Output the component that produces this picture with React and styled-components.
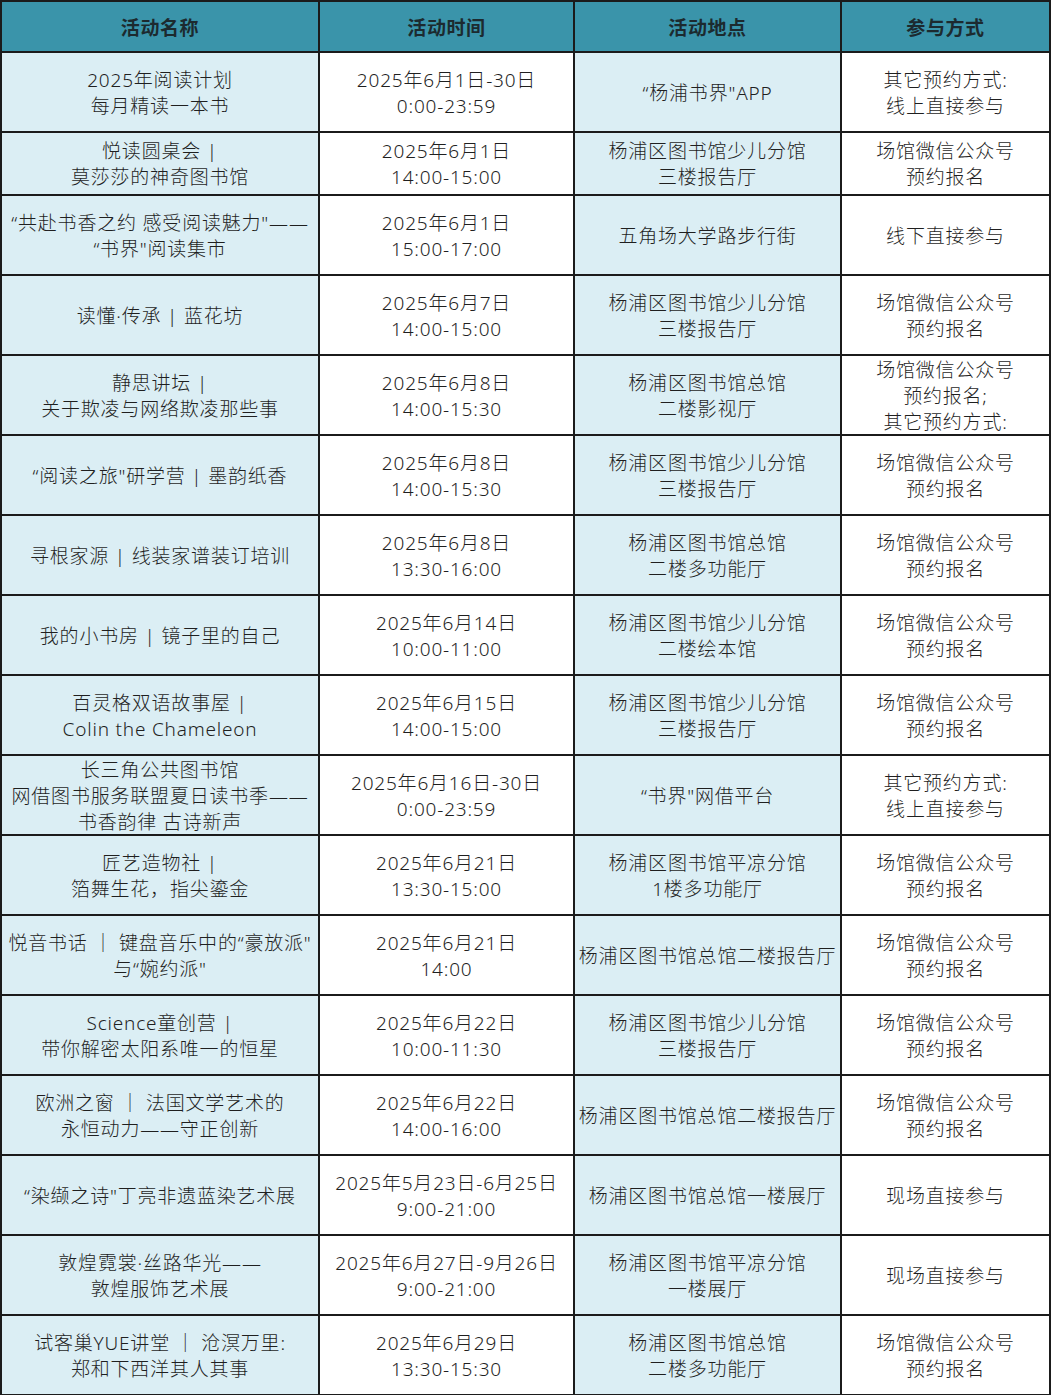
import React from "react";
import styled, { createGlobalStyle } from "styled-components";

const GlobalStyle = createGlobalStyle`
  html, body {
    margin: 0;
    padding: 0;
    background: #ffffff;
  }
  * { box-sizing: border-box; }
`;

const LINE = "#1b1b1b";

const Table = styled.div`
  width: 1051px;
  display: grid;
  grid-template-columns: 318px 255px 267px 1fr;
  grid-template-rows: 51px 80px 63px repeat(15, 80px);
  border-top: 2px solid ${LINE};
  border-left: 2px solid ${LINE};
  font-family: "Noto Sans", "Noto Sans CJK SC", sans-serif;
  color: #1f1f1f;
`;

const HeaderCell = styled.div`
  display: flex;
  align-items: center;
  justify-content: center;
  background: #3a94aa;
  border-right: 2px solid ${LINE};
  border-bottom: 2px solid ${LINE};
  font-size: 19px;
  font-weight: 700;
  letter-spacing: 0.6px;
  color: #1c2a2f;
`;

const Cell = styled.div`
  display: flex;
  flex-direction: column;
  align-items: center;
  justify-content: center;
  text-align: center;
  background: ${(p) => (p.$tinted ? "#dbeef4" : "#ffffff")};
  border-right: 2px solid ${LINE};
  border-bottom: 2px solid ${LINE};
  font-size: 19px;
  font-weight: 300;
  line-height: 26px;
  letter-spacing: 0.8px;
  white-space: nowrap;
  padding-top: 1px;
`;

const Line = styled.span`
  display: block;
`;

const headers = ["活动名称", "活动时间", "活动地点", "参与方式"];

const SIGN = "场馆微信公众号\n预约报名";

const rows = [
  ["2025年阅读计划\n每月精读一本书", "2025年6月1日-30日\n0:00-23:59", "“杨浦书界\"APP", "其它预约方式:\n线上直接参与"],
  ["悦读圆桌会 |\n莫莎莎的神奇图书馆", "2025年6月1日\n14:00-15:00", "杨浦区图书馆少儿分馆\n三楼报告厅", SIGN],
  ["“共赴书香之约 感受阅读魅力\"——\n“书界\"阅读集市", "2025年6月1日\n15:00-17:00", "五角场大学路步行街", "线下直接参与"],
  ["读懂·传承 | 蓝花坊", "2025年6月7日\n14:00-15:00", "杨浦区图书馆少儿分馆\n三楼报告厅", SIGN],
  ["静思讲坛 |\n关于欺凌与网络欺凌那些事", "2025年6月8日\n14:00-15:30", "杨浦区图书馆总馆\n二楼影视厅", "场馆微信公众号\n预约报名;\n其它预约方式:"],
  ["“阅读之旅\"研学营 | 墨韵纸香", "2025年6月8日\n14:00-15:30", "杨浦区图书馆少儿分馆\n三楼报告厅", SIGN],
  ["寻根家源 | 线装家谱装订培训", "2025年6月8日\n13:30-16:00", "杨浦区图书馆总馆\n二楼多功能厅", SIGN],
  ["我的小书房 | 镜子里的自己", "2025年6月14日\n10:00-11:00", "杨浦区图书馆少儿分馆\n二楼绘本馆", SIGN],
  ["百灵格双语故事屋 |\nColin the Chameleon", "2025年6月15日\n14:00-15:00", "杨浦区图书馆少儿分馆\n三楼报告厅", SIGN],
  ["长三角公共图书馆\n网借图书服务联盟夏日读书季——\n书香韵律 古诗新声", "2025年6月16日-30日\n0:00-23:59", "“书界\"网借平台", "其它预约方式:\n线上直接参与"],
  ["匠艺造物社 |\n箔舞生花，指尖鎏金", "2025年6月21日\n13:30-15:00", "杨浦区图书馆平凉分馆\n1楼多功能厅", SIGN],
  ["悦音书话 ｜ 键盘音乐中的“豪放派\"\n与“婉约派\"", "2025年6月21日\n14:00", "杨浦区图书馆总馆二楼报告厅", SIGN],
  ["Science童创营 |\n带你解密太阳系唯一的恒星", "2025年6月22日\n10:00-11:30", "杨浦区图书馆少儿分馆\n三楼报告厅", SIGN],
  ["欧洲之窗 ｜ 法国文学艺术的\n永恒动力——守正创新", "2025年6月22日\n14:00-16:00", "杨浦区图书馆总馆二楼报告厅", SIGN],
  ["“染缬之诗\"丁亮非遗蓝染艺术展", "2025年5月23日-6月25日\n9:00-21:00", "杨浦区图书馆总馆一楼展厅", "现场直接参与"],
  ["敦煌霓裳·丝路华光——\n敦煌服饰艺术展", "2025年6月27日-9月26日\n9:00-21:00", "杨浦区图书馆平凉分馆\n一楼展厅", "现场直接参与"],
  ["试客巢YUE讲堂 ｜ 沧溟万里:\n郑和下西洋其人其事", "2025年6月29日\n13:30-15:30", "杨浦区图书馆总馆\n二楼多功能厅", SIGN],
];

export default function App() {
  return (
    <>
      <GlobalStyle />
      <Table>
        {headers.map((h) => (
          <HeaderCell key={h}>{h}</HeaderCell>
        ))}
        {rows.map((row, r) =>
          row.map((text, c) => (
            <Cell key={`${r}-${c}`} $tinted={c % 2 === 0}>
              {text.split("\n").map((t, i) => (
                <Line key={i}>{t}</Line>
              ))}
            </Cell>
          ))
        )}
      </Table>
    </>
  );
}
